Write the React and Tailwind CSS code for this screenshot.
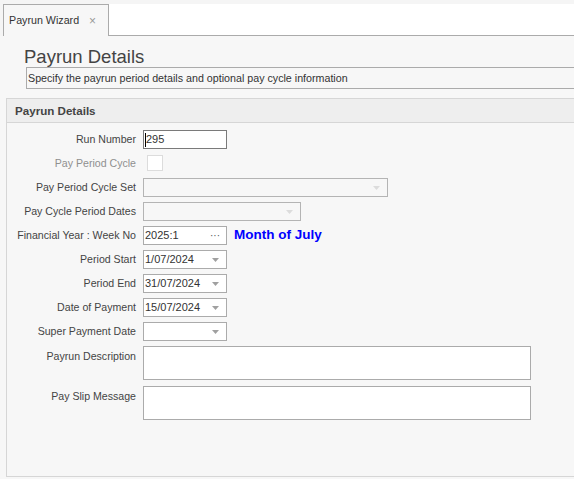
import React from 'react';

const font = { fontFamily: '"Liberation Sans", Arial, sans-serif' };

const Arrow = ({ faint }) => (
  <svg width="7" height="4" viewBox="0 0 7 4" className="mr-[7px]">
    <path d="M0 0 L7 0 L3.5 4 Z" fill={faint ? '#dcdcdc' : '#a0a0a0'} />
  </svg>
);

const Combo = ({ w, value, disabled }) => (
  <div
    className={`flex h-[19px] items-center justify-between border ${
      disabled ? 'border-[#b4b4b4] bg-[#f7f7f7]' : 'border-[#ababab] bg-white'
    }`}
    style={{ width: w }}
  >
    <span className="pl-[1px] text-[11px] text-[#333]">{value}</span>
    <Arrow faint={disabled} />
  </div>
);

const Row = ({ label, muted, top, children, className = '' }) => (
  <div className={`flex ${top ? 'items-start' : 'h-[19px] items-center'} ${className}`}>
    <div
      className={`w-[130px] shrink-0 pr-[1px] text-right text-[10.6px] ${
        muted ? 'text-[#8f8f8f]' : 'text-[#444]'
      } ${top ? 'pt-[3px]' : ''}`}
    >
      {label}
    </div>
    <div className="ml-[6px] flex items-center">{children}</div>
  </div>
);

export default function App() {
  return (
    <div className="h-[479px] w-[574px] overflow-hidden bg-[#f7f7f7]" style={font}>
      {/* tab strip */}
      <div className="flex h-[36px] bg-[#f5f5f5]">
        <div className="w-[3px] shrink-0" />
        <div className="mt-[4px] flex w-[106px] shrink-0 items-center border border-b-0 border-[#ababab] bg-[#f7f7f7] pl-[5px] text-[10.7px] text-[#333]">
          <span>Payrun Wizard</span>
          <span className="ml-[10px] text-[12px] text-[#9a9a9a]">×</span>
        </div>
        <div className="mt-[4px] flex-1 border-b border-[#ababab] bg-white" />
      </div>

      {/* title */}
      <div className="ml-[24px] mt-[10px] h-[21px] text-[18.5px] leading-[22px] text-[#444]">Payrun Details</div>
      <div className="ml-[26px] flex h-[22px] w-[560px] items-center border border-[#ababab] bg-[#f7f7f7] pl-[1px] text-[10.7px] text-[#333]">
        Specify the payrun period details and optional pay cycle information
      </div>

      {/* group */}
      <div className="ml-[6px] mt-[9px] h-[379px] w-[580px] border border-[#d6d6d6]">
        <div className="flex h-[24px] items-center border-b border-[#d6d6d6] bg-[#eeeeee] pl-[8px] text-[11.6px] font-bold text-[#444]">
          Payrun Details
        </div>

        <div className="mt-[7px] flex flex-col gap-[5px]">
          <Row label="Run Number">
            <div className="relative flex h-[19px] w-[84px] items-center border border-[#7a7a7a] bg-white pl-[2px] text-[11px] text-[#333]">
              <span className="absolute left-[1px] top-[2px] h-[14px] w-px bg-black" />
              295
            </div>
          </Row>
          <Row label="Pay Period Cycle" muted>
            <div className="ml-[4px] mt-[-2px] h-[16px] w-[16px] border border-[#dcdcdc] bg-white" />
          </Row>
          <Row label="Pay Period Cycle Set">
            <Combo w={245} disabled />
          </Row>
          <Row label="Pay Cycle Period Dates">
            <Combo w={158} disabled />
          </Row>
          <Row label="Financial Year : Week No">
            <div className="flex h-[19px] w-[84px] items-center justify-between border border-[#ababab] bg-white pl-[1px] text-[11px] text-[#333]">
              <span>2025:1</span>
              <span className="mr-[6px] text-[10px] leading-none text-[#555]">···</span>
            </div>
            <span className="ml-[7px] text-[13.5px] font-bold text-[#0000ff]">Month of July</span>
          </Row>
          <Row label="Period Start">
            <Combo w={84} value="1/07/2024" />
          </Row>
          <Row label="Period End">
            <Combo w={84} value="31/07/2024" />
          </Row>
          <Row label="Date of Payment">
            <Combo w={84} value="15/07/2024" />
          </Row>
          <Row label="Super Payment Date">
            <Combo w={84} value="" />
          </Row>
          <Row label="Payrun Description" top>
            <div className="h-[34px] w-[388px] border border-[#ababab] bg-white" />
          </Row>
          <Row label="Pay Slip Message" top className="mt-[1px]">
            <div className="h-[34px] w-[388px] border border-[#ababab] bg-white" />
          </Row>
        </div>
      </div>
    </div>
  );
}
